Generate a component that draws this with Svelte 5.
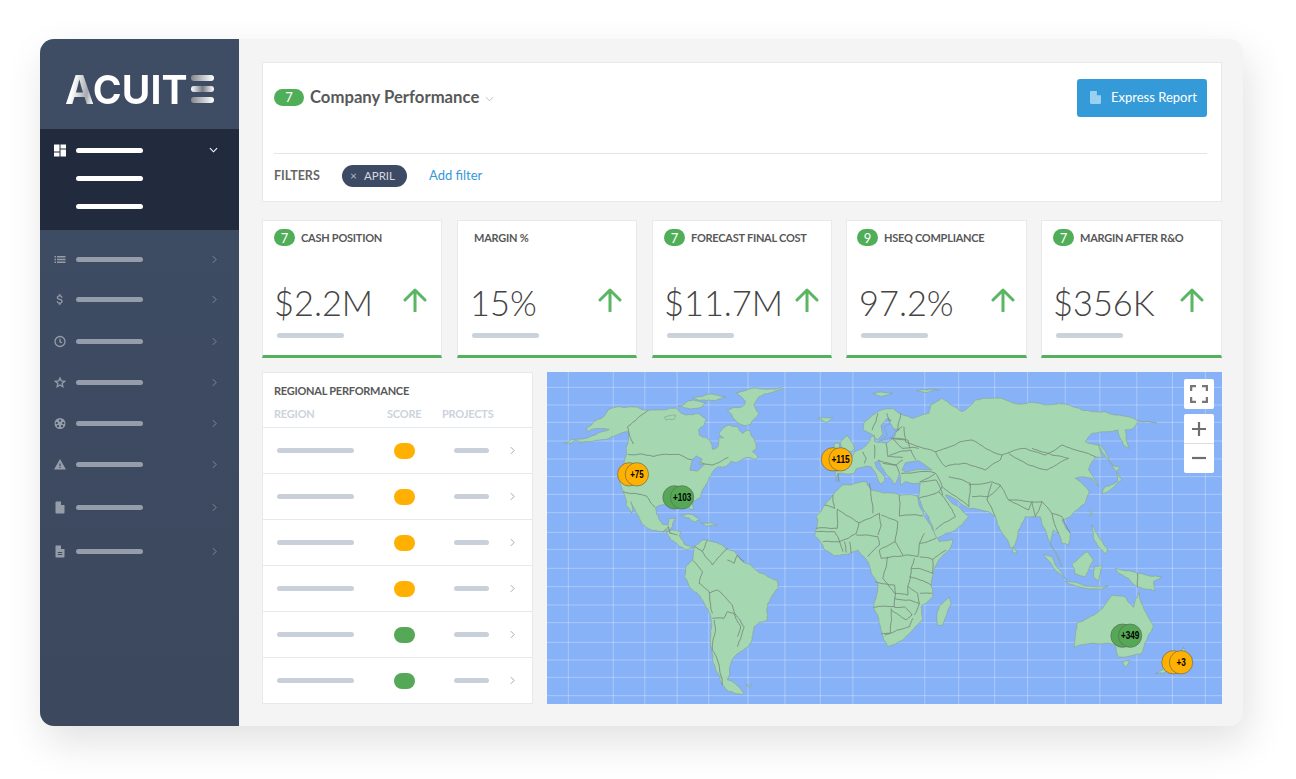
<script>
  const navItems = [
    { icon: 'list' },
    { icon: 'dollar' },
    { icon: 'clock' },
    { icon: 'star' },
    { icon: 'reel' },
    { icon: 'warning' },
    { icon: 'file' },
    { icon: 'doc' }
  ];

  const cards = [
    { badge: '7', title: 'CASH POSITION', value: '$2.2M' },
    { badge: '', title: 'MARGIN %', value: '15%' },
    { badge: '7', title: 'FORECAST FINAL COST', value: '$11.7M' },
    { badge: '9', title: 'HSEQ COMPLIANCE', value: '97.2%' },
    { badge: '7', title: 'MARGIN AFTER R&O', value: '$356K' }
  ];

  const regions = ['amber', 'amber', 'amber', 'amber', 'green', 'green'];

  const gridX = [67, 202, 297, 394, 489, 607, 718, 824, 922, 1138, 1240, 1348, 1447, 1560, 1664, 1775, 1882, 1981];
  const gridY = [52, 105, 157, 213, 267, 320, 373, 428, 487, 538, 595, 650, 705, 758, 817, 870, 922, 977];

  const pins = [
    { x: 250, y: 313, label: '+75', w: 40, color: '#ffb000' },
    { x: 386, y: 382, label: '+103', w: 55, color: '#54a856' },
    { x: 862, y: 268, label: '+115', w: 55, color: '#ffb000' },
    { x: 1732, y: 797, label: '+349', w: 55, color: '#54a856' },
    { x: 1885, y: 877, label: '+3', w: 28, color: '#ffb000' }
  ];

  // small seeded noise so the hand-plotted outlines don't look straight
  let seed = 7;
  const noise = () => {
    seed = (seed * 16807) % 2147483647;
    return seed / 2147483647 - 0.5;
  };

  const split = (a, b, amount, out) => {
    const dx = b[0] - a[0];
    const dy = b[1] - a[1];
    const len = Math.hypot(dx, dy);
    if (len < 9) {
      out.push(b);
      return;
    }
    const off = noise() * amount;
    const mid = [(a[0] + b[0]) / 2 - (dy / len) * off * len, (a[1] + b[1]) / 2 + (dx / len) * off * len];
    split(a, mid, amount, out);
    split(mid, b, amount, out);
  };

  const rough = (d, amount = 0.22) =>
    d
      .split('M')
      .filter(Boolean)
      .map((part) => {
        const closed = part.includes('Z');
        const nums = part.replace(/[LZ]/g, ' ').trim().split(/\s+/).map(Number);
        const pts = [];
        for (let i = 0; i < nums.length; i += 2) pts.push([nums[i], nums[i + 1]]);
        if (closed) pts.push(pts[0]);
        const out = [pts[0]];
        for (let i = 1; i < pts.length; i++) split(pts[i - 1], pts[i], amount, out);
        return 'M' + out.map((p) => p[0].toFixed(1) + ' ' + p[1].toFixed(1)).join('L') + (closed ? 'Z' : '');
      })
      .join('');

  // zoomed-in (3x) coordinates, americas
  const americas = [
    'M55 220L100 207 140 197 190 178 165 176 125 185 122 175 148 152 165 146 180 130 186 120 240 112 305 122 350 120 392 114 402 126 420 135 455 130 482 150 474 166 458 180 460 195 495 215 500 238 515 232 518 205 533 203 520 190 548 165 575 170 590 190 610 180 625 205 632 236 620 245 636 260 632 268 605 262 578 275 555 275 540 290 520 290 490 325 480 345 465 380 442 395 445 420 432 418 425 395 400 393 365 400 345 405 330 412 332 432 350 463 366 466 370 445 390 443 380 470 362 482 375 510 400 530 420 540 440 530 415 522 400 495 406 486 378 480 352 485 340 485 300 470 280 445 255 395 257 430 240 405 232 365 215 320 235 280 241 255 240 235 246 185 225 190 190 205 120 215Z',
    'M470 510L500 515 540 535 575 555 600 580 630 600 695 630 698 655 675 685 665 750 625 770 608 830 578 850 552 890 545 930 595 970 550 965 530 945 510 900 498 840 492 730 470 690 430 650 415 620 420 590 440 570 445 530Z',
    'M570 68L620 55 712 55 675 68 640 80 625 105 640 130 615 165 590 165 562 145 545 120 590 110 600 95Z',
    'M395 108L430 92 482 96 470 110 420 114Z',
    'M440 84L500 72 540 80 510 92 470 90Z',
    'M355 142L390 136 385 148 360 150Z',
    'M405 434L430 432 462 450 445 456 430 444Z',
    'M465 458L495 458 515 465 480 468Z',
    'M600 945L618 945 612 952Z'
  ].map((d) => rough(d));

  const americaBorders = [
    'M305 122L245 170 250 195 262 222',
    'M246 253L400 253 430 268 455 270 478 282 500 285 548 262',
    'M232 365L282 373 302 378 328 412',
    'M352 485L368 470 372 490 395 495',
    'M440 570L470 605 460 640 490 665 495 715 500 730',
    'M445 530L470 545 485 510M470 545L500 585 545 535M545 570L565 580 575 555 595 575',
    'M490 670L515 660 560 705 565 725 595 770 580 815 575 830',
    'M500 745L535 745 545 725 565 730 585 770 575 800',
    'M505 750L500 840 520 885 530 945'
  ].map((d) => rough(d, 0.12));

  // africa, zoom offset translate(762 390)
  const africa = [
    'M50 50L75 15 100 -15 130 -45 200 -55 215 -30 300 -15 340 -15 355 -10 375 50 410 110 420 125 460 118 450 150 410 195 395 250 400 290 365 320 370 355 335 395 310 420 265 440 240 370 222 320 235 250 215 220 205 185 175 150 105 168 75 150 45 105 55 60Z',
    'M450 290L455 312 430 375 415 376 412 345 420 318Z'
  ].map((d) => rough(d, 0.14));

  const africaBorders = [
    'M113 28L113 85 50 85M113 28L178 68 170 100M178 68L240 40 245 75 235 105',
    'M210 -50L215 -10 220 40M100 -15L105 25 75 15M300 -15L300 48 370 48',
    'M245 45L295 65 287 125 240 150M170 105L235 110 240 135 205 170',
    'M240 150L245 175 320 165 355 170 360 130 375 100M287 125L310 165',
    'M360 130L410 115M360 170L400 178 440 150M400 178L400 220 355 205 335 205',
    'M265 170L250 235 285 280 325 285 325 260 335 205 345 175',
    'M228 245L285 255 285 320 222 322M285 295L330 300 360 310 355 280 325 260',
    'M330 230L395 255M362 280L398 280M360 310L345 345',
    'M275 325L272 400 245 400M275 330L320 360 338 345 315 320 285 322M255 405L330 380 340 355',
    'M120 125L130 155M150 125L155 160M135 125L140 158M70 125L105 125 120 125 170 100M50 95L105 95M105 95L120 125'
  ].map((d) => rough(d, 0.1));

  // eurasia and the east, zoom offset translate(1020 0)
  const eurasia = [
    'M-148 335L-150 305 -130 298 -93 245 -68 235 -53 220 -43 200 -33 195 -33 215 2 220 27 200 32 185 42 180 7 170 17 150 4 145 -13 165 -8 190 -23 210 -38 195 -68 180 -63 155 -13 120 22 115 52 135 82 145 130 130 135 105 170 85 230 125 270 90 350 85 385 100 480 105 520 100 620 125 700 135 815 158 760 155 745 175 720 180 732 235 715 225 698 180 665 185 620 190 600 215 640 225 652 262 630 260 610 300 625 320 642 350 620 325 590 320 570 325 612 365 600 400 555 440 530 450 556 490 550 525 530 520 520 490 505 480 495 520 530 590 500 530 480 480 465 440 440 440 420 440 385 530 375 535 345 480 330 440 310 425 250 415 205 385 180 375 200 400 225 415 250 440 210 480 155 505 130 440 100 385 105 340 60 335 45 345 45 320 42 310 37 325 27 345 10 320 -20 272 -33 278 -3 320 -3 332 -15 342 -43 290 -58 288 -88 296 -93 310 -143 310Z',
    'M650 372L660 350 698 335 695 305 710 330 672 362Z',
    'M680 285L705 292 692 305Z',
    'M640 222L650 230 682 285 665 265Z',
    'M615 420L622 425 615 440Z',
    'M620 465L635 490 668 540 660 552 640 530 625 505Z',
    'M475 553L500 560 545 630 510 600Z',
    'M540 635L600 648 670 648 650 658 600 655Z',
    'M560 582L605 545 625 570 600 620 570 612Z',
    'M628 590L652 585 640 632 625 620Z',
    'M690 595L760 610 830 620 805 635 810 662 755 650 730 625 700 610Z',
    'M565 832L575 760 640 725 680 675 720 680 745 712 762 668 805 770 770 850 700 862 690 825 625 820Z',
    'M710 875L735 870 720 892Z',
    'M810 912L862 880 840 908Z',
    'M895 830L905 850 890 848Z',
    'M385 530L395 548 380 548Z',
    'M-135 215L-115 195 -93 235 -103 245 -128 245Z',
    'M-153 220L-138 220 -138 235 -155 235Z',
    'M-203 145L-158 142 -178 158Z',
    'M-38 70L22 70 -13 80Z',
    'M92 62L162 60 122 68Z'
  ].map((d) => rough(d, 0.14));

  const eurasiaBorders = [
    'M150 245L225 215 260 210 350 255 420 235 480 255 530 225 590 245 630 260',
    'M370 250L430 285 485 300 550 265 500 255 440 235',
    'M345 345L370 390 430 395 470 395 500 430 530 440',
    'M150 245L180 290 240 280 300 300 345 270 350 255',
    'M150 310L170 350 250 410 255 340 190 320',
    'M250 345L320 335 345 345 310 380 260 380M320 340L305 390 330 440',
    'M370 390L430 420 440 395 450 440 470 395',
    'M100 385L160 365 210 440 150 480M160 365L170 350',
    'M47 310L135 305 150 310 105 335',
    'M500 430L520 490M530 440L555 490',
    'M55 170L60 215 100 230 150 245M20 205L50 235 100 235M32 185L50 170',
    'M-23 130L-40 180M4 130L12 155M47 130L37 180',
    'M-68 245L-58 265 -63 280M-33 225L-33 265M2 220L7 260 42 245 77 240 92 270',
    'M17 205L67 210 72 235M17 205L57 208',
    'M-8 280L32 285 52 270M12 260L52 262M-143 310L-140 335',
    'M-23 270L32 285 42 310M102 335L152 330 172 375',
    'M757 610L757 650'
  ].map((d) => rough(d, 0.1));

  const seas = [
    'M50 300L60 278 100 272 140 300 100 298 60 306Z',
    'M-20 215L5 195 -5 170 15 160 30 185 20 200Z'
  ];
</script>

<div class="shell">
  <aside class="sidebar">
    <div class="logo">
      <span class="logo-text">ACUIT</span>
      <span class="logo-bars"><i></i><i></i><i></i></span>
    </div>

    <div class="active-group">
      <div class="active-row">
        <svg class="icon icon--white" viewBox="0 0 12 12">
          <path d="M0 0h5.500v7H0zM0 8h5.500v4H0zM6.500 0H12v4H6.500zM6.500 5H12v7H6.500z" />
        </svg>
        <span class="line line--white"></span>
        <svg class="chev chev--down" viewBox="0 0 10 6"><path d="M1 1l4 4 4-4" /></svg>
      </div>
      <div class="sub-row"><span class="line line--white"></span></div>
      <div class="sub-row"><span class="line line--white"></span></div>
    </div>

    <ul class="nav">
      {#each navItems as item}
        <li class="nav-item">
          {#if item.icon === 'dollar'}
            <svg class="icon" viewBox="4 1 16 22">
              <path d="M11.800 10.900c-2.270-.59-3-1.200-3-2.150 0-1.090 1.010-1.850 2.700-1.850 1.780 0 2.440.85 2.500 2.100h2.210c-.07-1.720-1.120-3.300-3.210-3.810V3h-3v2.160c-1.940.42-3.500 1.680-3.500 3.610 0 2.310 1.910 3.460 4.700 4.130 2.500.6 3 1.480 3 2.410 0 .69-.49 1.790-2.700 1.790-2.060 0-2.870-.92-2.980-2.100h-2.200c.12 2.190 1.760 3.420 3.680 3.830V21h3v-2.150c1.950-.37 3.500-1.500 3.500-3.550 0-2.840-2.430-3.810-4.700-4.400z" />
            </svg>
          {:else}
            <svg class="icon" viewBox="0 0 24 24">
              {#if item.icon === 'list'}
                <path d="M1 5h3v3H1zM6 5h17v3H6zM1 10.500h3v3H1zM6 10.500h17v3H6zM1 16h3v3H1zM6 16h17v3H6z" />
              {:else if item.icon === 'clock'}
                <circle class="outline" cx="12" cy="12" r="10" />
                <path class="outline" d="M12 6.500V12.500l4 2" />
              {:else if item.icon === 'star'}
                <path class="outline" d="M12 3l2.700 6 6.500.7-4.900 4.300 1.400 6.400L12 17l-5.700 3.400 1.400-6.400-4.900-4.300 6.500-.7z" />
              {:else if item.icon === 'reel'}
                <path fill-rule="evenodd" d="M12 1a11 11 0 100 22 11 11 0 000-22zM12 4a2.300 2.300 0 110 4.600A2.300 2.300 0 0112 4zM5.500 9a2.300 2.300 0 110 4.600 2.300 2.300 0 010-4.600zM18.500 9a2.300 2.300 0 110 4.600 2.300 2.300 0 010-4.600zM8 15a2.300 2.300 0 110 4.600A2.300 2.300 0 018 15zM16 15a2.300 2.300 0 110 4.600 2.300 2.300 0 010-4.600z" />
              {:else if item.icon === 'warning'}
                <path d="M0 22h24L12 1 0 22zm13.200-3h-2.400v-2.400h2.400V19zm0-4h-2.400v-5h2.400v5z" />
              {:else if item.icon === 'file'}
                <path d="M14 0H5C3.600 0 3 1 3 2v20c0 1 .6 2 2 2h14c1.400 0 2-1 2-2V7h-7z" />
              {:else}
                <path fill-rule="evenodd" d="M14 0H5C3.600 0 3 1 3 2v20c0 1 .6 2 2 2h14c1.400 0 2-1 2-2V7h-7zM7.500 13h9v2h-9zM7.500 17h9v2h-9z" />
              {/if}
            </svg>
          {/if}
          <span class="line"></span>
          <svg class="chev" viewBox="0 0 6 10"><path d="M1 1l4 4-4 4" /></svg>
        </li>
      {/each}
    </ul>
  </aside>

  <main class="main">
    <section class="panel">
      <div class="panel-head">
        <div class="heading">
          <span class="badge badge--wide">7</span>
          <h1>Company Performance</h1>
          <svg class="caret" viewBox="0 0 10 6"><path d="M1 1l4 4 4-4" /></svg>
        </div>
        <button class="report">
          <svg viewBox="0 0 12 14"><path d="M7.500 0H1.200C.5 0 0 .5 0 1.200v11.600C0 13.500.5 14 1.200 14h9.600c.7 0 1.200-.5 1.200-1.200V4.500H7.500z" /></svg>
          Express Report
        </button>
      </div>
      <div class="filters">
        <span class="filters-label">FILTERS</span>
        <span class="chip"><span class="chip-x">×</span>APRIL</span>
        <span class="add-filter">Add filter</span>
      </div>
    </section>

    <section class="cards">
      {#each cards as card}
        <article class="card">
          <div class="card-title">
            {#if card.badge}<span class="badge">{card.badge}</span>{/if}
            <span>{card.title}</span>
          </div>
          <div class="card-value">
            <span class="value">{card.value}</span>
            <svg class="arrow" viewBox="0 0 24 24">
              <path d="M12 23V2M2 12L12 2l10 10" />
            </svg>
          </div>
          <span class="card-line"></span>
        </article>
      {/each}
    </section>

    <section class="bottom">
      <div class="regions">
        <h2>REGIONAL PERFORMANCE</h2>
        <div class="region-head">
          <span>REGION</span><span>SCORE</span><span>PROJECTS</span>
        </div>
        {#each regions as score}
          <div class="region-row">
            <span class="region-name"></span>
            <span class="score score--{score}"></span>
            <span class="region-count"></span>
            <svg class="chev chev--light" viewBox="0 0 6 10"><path d="M1 1l4 4-4 4" /></svg>
          </div>
        {/each}
      </div>

      <div class="map">
        <svg viewBox="3 6 2028 996" preserveAspectRatio="none">
          {#each gridX as x}<line class="grid" x1={x} x2={x} y1="0" y2="1002" />{/each}
          {#each gridY as y}<line class="grid" y1={y} y2={y} x1="0" x2="2031" />{/each}

          {#each americas as d}<path class="land" {d} />{/each}
          {#each americaBorders as d}<path class="border" {d} />{/each}
          <path class="lake" d="M432 300L440 268 452 258 470 268 458 282 478 282 455 303Z" />
          <g transform="translate(762 390)">
            {#each africa as d}<path class="land" {d} />{/each}
            {#each africaBorders as d}<path class="border" {d} />{/each}
          </g>
          <g transform="translate(1020 0)">
            {#each eurasia as d}<path class="land" {d} />{/each}
            {#each seas as d}<path class="lake" {d} />{/each}
            {#each eurasiaBorders as d}<path class="border" {d} />{/each}
          </g>

          {#each pins as pin}
            <circle class="pin" cx={pin.x} cy={pin.y} r="35" fill={pin.color} />
            <circle class="pin" cx={pin.x + 23} cy={pin.y} r="35" fill={pin.color} />
            <text
              class="pin-label"
              x={pin.x + 23}
              y={pin.y + 10}
              textLength={pin.w}
              lengthAdjust="spacingAndGlyphs">{pin.label}</text>
          {/each}
        </svg>

        <div class="map-btn map-btn--full">
          <svg viewBox="0 0 18 18"><path d="M1 6V1h5M12 1h5v5M17 12v5h-5M6 17H1v-5" /></svg>
        </div>
        <div class="map-zoom">
          <svg viewBox="0 0 14 14"><path d="M7 0v14M0 7h14" /></svg>
          <svg viewBox="0 0 14 14"><path d="M0 7h14" /></svg>
        </div>
      </div>
    </section>
  </main>
</div>

<style>
  :global(body) {
    background: #fff;
    font-family: Lato, 'Liberation Sans', sans-serif;
  }

  :global(#app) {
    height: 779px;
    overflow: hidden;
  }

  .shell {
    display: flex;
    width: 1203px;
    height: 687px;
    margin: 39px 0 0 40px;
    border-radius: 14px;
    background: #f4f4f4;
    box-shadow: 5px 16px 40px rgba(0, 0, 0, 0.12);
  }

  .sidebar {
    flex: 0 0 199px;
    border-radius: 14px 0 0 14px;
    background: linear-gradient(#3f4d64, #3b485e);
  }

  .logo {
    display: flex;
    align-items: center;
    height: 90px;
    box-sizing: border-box;
    padding: 10px 0 0 25px;
  }

  .logo-text {
    font-family: Inter, sans-serif;
    font-size: 39px;
    font-weight: 700;
    letter-spacing: 0.2px;
    line-height: 1;
    background: linear-gradient(100deg, #fff 8%, #a5a9b0 20%, #fff 26%);
    -webkit-background-clip: text;
    background-clip: text;
    color: transparent;
  }

  .logo-bars {
    display: flex;
    flex-direction: column;
    gap: 5px;
    width: 23px;
    margin-left: 3px;
  }

  .logo-bars i {
    height: 6px;
    border-radius: 3px;
    background: linear-gradient(90deg, #83888f, #fff);
  }

  .logo-bars i:nth-child(2) {
    background: linear-gradient(90deg, #fff, #777c85, #fff);
  }

  .active-group {
    height: 101px;
    box-sizing: border-box;
    padding: 14px 0 0 14px;
    background: #212b3d;
  }

  .active-row,
  .nav-item {
    display: flex;
    align-items: center;
  }

  .active-row {
    height: 14px;
  }

  .sub-row {
    display: flex;
    height: 28px;
    align-items: center;
    padding-left: 22px;
  }

  .sub-row:nth-child(2) {
    margin-top: 7px;
  }

  .line {
    width: 67px;
    height: 5px;
    border-radius: 3px;
    background: #959dab;
  }

  .line--white {
    background: #fff;
  }

  .icon {
    width: 12px;
    height: 13px;
    margin-right: 10px;
    fill: #959dab;
  }

  .icon--white {
    fill: #fff;
  }

  .icon .outline {
    fill: none;
    stroke: #959dab;
    stroke-width: 2.600;
  }

  .chev {
    width: 5px;
    height: 9px;
    margin-left: 69px;
    fill: none;
    stroke: #7f8899;
    stroke-width: 1.200;
  }

  .chev--down {
    width: 9px;
    height: 6px;
    margin-left: 66px;
    stroke: #fff;
  }

  .nav {
    margin: 0;
    padding: 9px 0 0 14px;
    list-style: none;
  }

  .nav-item {
    height: 41px;
  }

  .nav-item:nth-child(1) {
    height: 40px;
  }

  .nav-item:nth-child(3) {
    height: 42px;
  }

  .nav-item:nth-child(7) {
    height: 44px;
  }

  .nav-item:nth-child(8) {
    height: 44px;
  }

  .main {
    flex: 1;
    display: flex;
    flex-direction: column;
    min-width: 0;
    padding: 23px 21px 22px 23px;
  }

  .panel {
    height: 141px;
    box-sizing: border-box;
    padding: 16px 14px 0 11px;
    border: 1px solid #e8e8e8;
    background: #fff;
  }

  .panel-head {
    display: flex;
    justify-content: space-between;
    height: 74px;
    border-bottom: 1px solid #e5e5e5;
  }

  .heading {
    display: flex;
    align-items: center;
    height: 36px;
  }

  h1 {
    margin: 0 6px;
    font-size: 16.700px;
    font-weight: 700;
    color: #585858;
  }

  .caret {
    width: 9px;
    height: 6px;
    margin-top: 3px;
    fill: none;
    stroke: #b5b5b5;
    stroke-width: 1;
  }

  .badge {
    display: inline-flex;
    align-items: center;
    justify-content: center;
    width: 21px;
    height: 17px;
    border-radius: 9px;
    background: #4fae57;
    font-size: 13px;
    font-weight: 400;
    color: #fff;
  }

  .badge--wide {
    width: 30px;
  }

  .report {
    display: flex;
    align-items: center;
    gap: 10px;
    width: 130px;
    height: 38px;
    padding: 0 0 2px 13px;
    border: 0;
    border-radius: 3px;
    background: #359bd8;
    font-family: inherit;
    font-size: 13px;
    color: #fff;
  }

  .report svg {
    width: 11px;
    height: 13px;
    fill: #9ad0f0;
  }

  .filters {
    display: flex;
    align-items: center;
    height: 43px;
  }

  .filters-label {
    width: 68px;
    font-size: 12.500px;
    font-weight: 700;
    color: #666;
  }

  .chip {
    display: flex;
    align-items: center;
    gap: 7px;
    width: 65px;
    height: 22px;
    box-sizing: border-box;
    padding-left: 8px;
    border-radius: 11px;
    background: #3d4a64;
    font-size: 11.500px;
    color: #d6d9df;
  }

  .chip-x {
    font-size: 12px;
    color: #b0b6c1;
  }

  .add-filter {
    margin: -2px 0 0 22px;
    font-size: 13px;
    color: #3598dc;
  }

  .cards {
    display: grid;
    grid-template-columns: repeat(5, 1fr);
    gap: 15px;
    margin-top: 18px;
  }

  .card {
    display: flex;
    flex-direction: column;
    height: 138px;
    box-sizing: border-box;
    padding: 8px 0 0 11px;
    border: 1px solid #e6e9ee;
    border-bottom: 3px solid #55b05d;
    background: #fff;
  }

  .card:nth-child(2) {
    padding-left: 16px;
  }

  .card:nth-child(4) {
    margin-left: -1px;
    padding-left: 10px;
  }

  .card:nth-child(5) {
    margin-left: -1px;
  }

  .card-title {
    display: flex;
    align-items: center;
    gap: 6px;
    height: 17px;
    font-size: 11px;
    font-weight: 700;
    letter-spacing: -0.25px;
    color: #585858;
  }

  .card-value {
    display: flex;
    align-items: center;
    justify-content: space-between;
    height: 44px;
    margin-top: 34px;
    padding-right: 14px;
  }

  .card:nth-child(2) .card-value {
    margin-left: -4px;
  }

  .card:nth-child(3) .card-value {
    padding-right: 12px;
  }

  .card:nth-child(4) .card-value {
    margin-left: 2px;
    padding-right: 11px;
  }

  .card:nth-child(5) .card-value {
    padding-right: 17px;
  }

  .value {
    font-size: 34.400px;
    font-weight: 300;
    color: #444;
  }

  .arrow {
    width: 24px;
    height: 24px;
    margin-top: -4px;
    fill: none;
    stroke: #5ab663;
    stroke-width: 3;
    stroke-linecap: round;
    stroke-linejoin: round;
  }

  .card-line {
    width: 67px;
    height: 5px;
    margin: 9px 0 0 3px;
    border-radius: 3px;
    background: #cad2dc;
  }

  .card:nth-child(2) .card-line {
    margin-left: -2px;
  }

  .card:nth-child(4) .card-line {
    margin-left: 4px;
  }

  .bottom {
    display: flex;
    gap: 14px;
    margin-top: 14px;
  }

  .regions {
    flex: 0 0 271px;
    box-sizing: border-box;
    height: 332px;
    border: 1px solid #e6e9ee;
    background: #fff;
  }

  h2 {
    margin: 0;
    padding: 11px 0 0 11px;
    font-size: 11px;
    line-height: 14px;
    font-weight: 700;
    letter-spacing: -0.25px;
    color: #585858;
  }

  .region-head {
    display: grid;
    grid-template-columns: 113px 55px auto;
    height: 29px;
    padding: 9px 0 0 11px;
    box-sizing: border-box;
    font-size: 11px;
    font-weight: 700;
    letter-spacing: -0.2px;
    color: #ccd3dc;
  }

  .region-row {
    display: flex;
    align-items: center;
    height: 46px;
    box-sizing: border-box;
    padding-left: 14px;
    border-top: 1px solid #e6e9ee;
  }

  .region-name,
  .region-count {
    height: 5px;
    border-radius: 3px;
    background: #c9d0d9;
  }

  .region-name {
    width: 77px;
  }

  .score {
    width: 21px;
    height: 16px;
    margin-left: 40px;
    border-radius: 8px;
  }

  .score--amber {
    background: #ffb000;
  }

  .score--green {
    background: #54a856;
  }

  .region-count {
    width: 35px;
    margin-left: 39px;
  }

  .chev--light {
    margin-left: 21px;
    stroke: #a8a8a8;
  }

  .map {
    position: relative;
    flex: 1;
    height: 332px;
    background: #87b2f7;
  }

  .map > svg {
    display: block;
    width: 100%;
    height: 100%;
  }

  .land {
    fill: #a5d7b0;
    stroke: #86a596;
    stroke-width: 2;
  }

  .border {
    fill: none;
    stroke: #75897d;
    stroke-width: 2.600;
  }

  .lake {
    fill: #87b2f7;
    stroke: #86a596;
    stroke-width: 2;
  }

  .grid {
    stroke: #fff;
    stroke-opacity: 0.3;
    stroke-width: 3;
  }

  .pin {
    stroke: #5f6a5c;
    stroke-width: 2;
  }

  .pin-label {
    font-family: 'Liberation Sans', sans-serif;
    font-size: 31px;
    font-weight: 700;
    text-anchor: middle;
    fill: #000;
  }

  .map-btn,
  .map-zoom {
    position: absolute;
    right: 8px;
    width: 30px;
    border-radius: 2px;
    background: #fff;
  }

  .map-btn--full {
    top: 7px;
    height: 30px;
    display: flex;
    align-items: center;
    justify-content: center;
  }

  .map-btn--full svg {
    width: 18px;
    height: 18px;
    fill: none;
    stroke: #777;
    stroke-width: 2.500;
  }

  .map-zoom {
    top: 42px;
    height: 59px;
    display: flex;
    flex-direction: column;
    align-items: center;
    justify-content: space-around;
    background: linear-gradient(#fff 29px, #ddd 29px, #ddd 30px, #fff 30px);
  }

  .map-zoom svg {
    width: 14px;
    height: 14px;
    fill: none;
    stroke: #6e6e6e;
    stroke-width: 2.200;
  }
</style>
